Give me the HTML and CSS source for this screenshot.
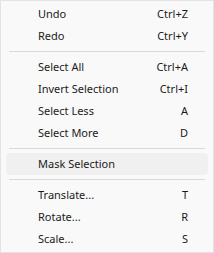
FILE: index.html
```html
<!DOCTYPE html>
<html lang="en">
<head>
    <meta charset="UTF-8">
    <title>Context Menu</title>
    <link rel="stylesheet" href="styles.css">
</head>
<body>
    <div class="menu">
        <div class="item"><span>Undo</span><span class="key">Ctrl+Z</span></div>
        <div class="item"><span>Redo</span><span class="key">Ctrl+Y</span></div>
        <div class="sep"></div>
        <div class="item"><span>Select All</span><span class="key">Ctrl+A</span></div>
        <div class="item"><span>Invert Selection</span><span class="key">Ctrl+I</span></div>
        <div class="item"><span>Select Less</span><span class="key">A</span></div>
        <div class="item"><span>Select More</span><span class="key">D</span></div>
        <div class="sep"></div>
        <div class="item active"><span>Mask Selection</span></div>
        <div class="sep"></div>
        <div class="item"><span>Translate...</span><span class="key">T</span></div>
        <div class="item"><span>Rotate...</span><span class="key">R</span></div>
        <div class="item"><span>Scale...</span><span class="key">S</span></div>
    </div>
</body>
</html>
```

FILE: styles.css
```css
body {
    margin: 0;
    font-family: "Noto Sans", "Open Sans", sans-serif;
    font-size: 11px;
    color: #1b1b1b;
}
.menu {
    width: 214px;
    height: 253px;
    box-sizing: border-box;
    background-color: #f9f9f9;
    border: 1px solid #e3e3e3;
    padding: 2px 0;
}
.item {
    display: flex;
    justify-content: space-between;
    align-items: center;
    height: 22px;
    margin: 0 5px;
    padding: 0 20px 1px 32px;
    box-sizing: border-box;
    border-radius: 4px;
}
.item.active {
    background-color: #f0f0f0;
}
.sep {
    height: 1px;
    margin: 4px 8px;
    background-color: #d9d9d9;
}
```
